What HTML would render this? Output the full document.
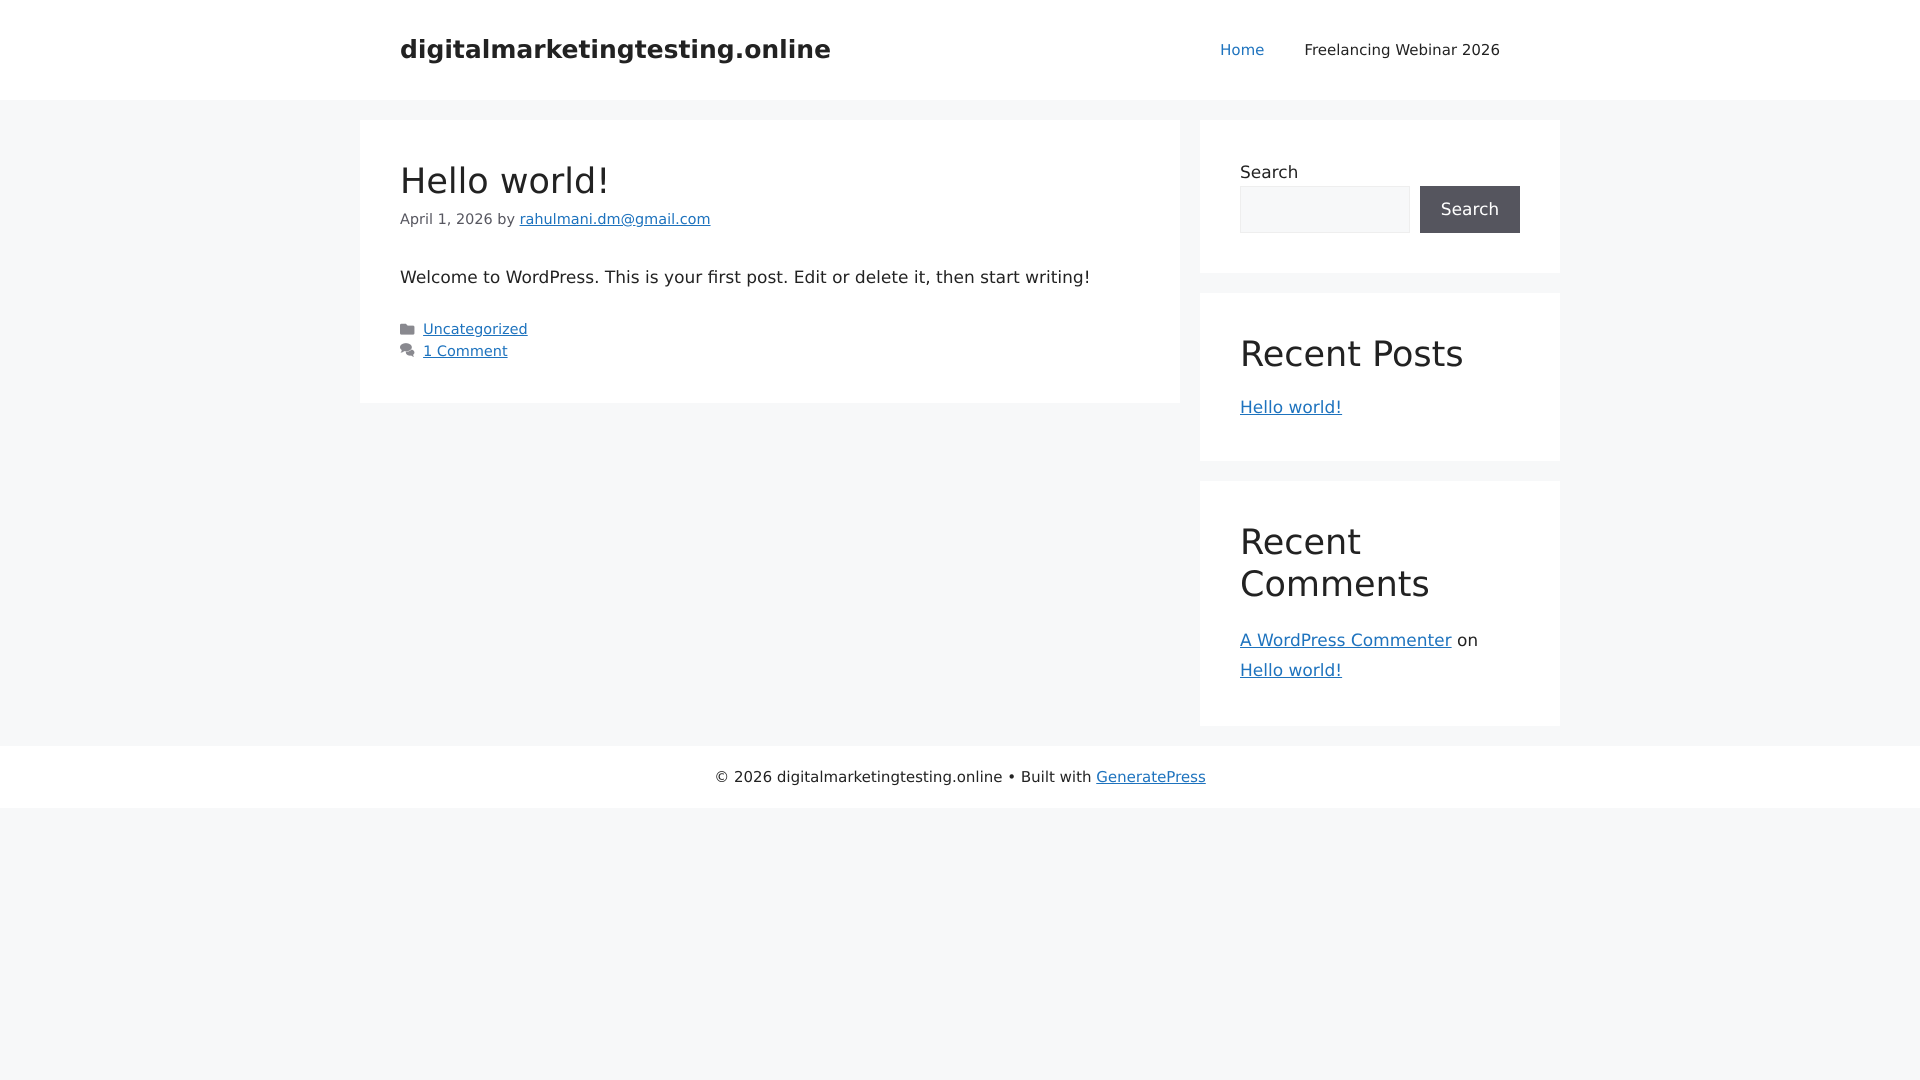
<!DOCTYPE html>
<html lang="en"><head><meta charset="utf-8"><title>digitalmarketingtesting.online</title>
<style>
*{box-sizing:border-box}
html,body{margin:0;padding:0}
body{width:1920px;height:1080px;overflow:hidden;background:#f7f8f9;color:#222;font:17px/1.5 system-ui,"DejaVu Sans",sans-serif;-webkit-font-smoothing:antialiased;text-rendering:geometricPrecision}
a{color:#1e73be}
header{background:#fff;height:100px}
.hw{width:1200px;margin:0 auto;padding:0 40px;height:100px;display:flex;justify-content:space-between;align-items:center}
.title{font-size:25px;font-weight:700;color:#222}
nav{display:flex;font-size:15px;line-height:60px;margin-right:0}
nav span{padding:0 20px;color:#222}
nav span.c{color:#1e73be}
.site{width:1200px;margin:0 auto;position:relative;height:646px}
.box{position:absolute;background:#fff}
.post{left:0;top:20px;width:820px;height:283px;padding:41px 40px 0}
.post h2{margin:0;font-size:35px;font-weight:400;line-height:42px}
.meta{font-size:14.45px;line-height:1.5;color:#575760;margin-top:7px}
.post p{margin:34px 0 0;line-height:25.5px}
.foot{font-size:14.45px;line-height:21.7px;margin-top:29px;color:#575760}
.foot div{display:flex;align-items:center}
.foot svg{width:14.45px;height:14.45px;fill:#89898f;margin-right:8.67px;flex:none;position:relative;overflow:visible}
.side{left:840px;width:360px;padding:41px 40px 0}
.side h2{margin:0 0 20px;font-size:35px;font-weight:400;line-height:42px}
.l{display:block;line-height:25.5px}
.sr{display:flex;gap:10px;margin-top:0}
.in{width:170px;height:47px;background:#f7f8f9;border:1px solid #eee}
.btn{width:100px;height:47px;background:#55555e;color:#fff;text-align:center;line-height:48px}
footer{background:#fff;height:62px;text-align:center;font-size:15px;line-height:62px}
</style></head><body>
<header><div class="hw"><div class="title">digitalmarketingtesting.online</div><nav><span class="c">Home</span><span>Freelancing Webinar 2026</span></nav></div></header>
<div class="site">
<div class="box post">
<h2>Hello world!</h2>
<div class="meta">April 1, 2026 by <a href="#">rahulmani.dm@gmail.com</a></div>
<p>Welcome to WordPress. This is your first post. Edit or delete it, then start writing!</p>
<div class="foot">
<div><svg style="top:-1.5px" viewBox="0 0 512 512"><path d="M464 128H272l-64-64H48C21.49 64 0 85.49 0 112v288c0 26.51 21.49 48 48 48h416c26.51 0 48-21.49 48-48V176c0-26.51-21.49-48-48-48z"/></svg><a href="#">Uncategorized</a></div>
<div><svg style="top:-3px" viewBox="0 0 512 512"><path d="M360 225c85 0 152 48 152 112 0 33-17 60-46 80 3 30 16 58 32 80-40-6-76-28-100-52-12 2-25 3-38 3-85 0-152-48-152-111 0-64 67-112 152-112z"/><path stroke="#fff" stroke-width="34" paint-order="stroke" d="M210 5c116 0 210 64 210 145 0 80-94 145-210 145-22 0-43-2-62-7-32 30-78 52-130 57 24-28 40-60 43-97C22 222 0 188 0 150 0 69 94 5 210 5z"/></svg><a href="#">1 Comment</a></div>
</div>
</div>
<div class="box side" style="top:20px;height:153px;padding-top:40px">
<div class="l" style="height:25px;margin-top:1px">Search</div>
<div class="sr"><div class="in"></div><div class="btn">Search</div></div>
</div>
<div class="box side" style="top:193px;height:168px">
<h2>Recent Posts</h2>
<a class="l" href="#">Hello world!</a>
</div>
<div class="box side" style="top:381px;height:245px">
<h2>Recent Comments</h2>
<div style="line-height:30px"><a href="#">A WordPress Commenter</a> on<br><a href="#">Hello world!</a></div>
</div>
</div>
<footer>© 2026 digitalmarketingtesting.online • Built with <a href="#">GeneratePress</a></footer>
</body></html>
